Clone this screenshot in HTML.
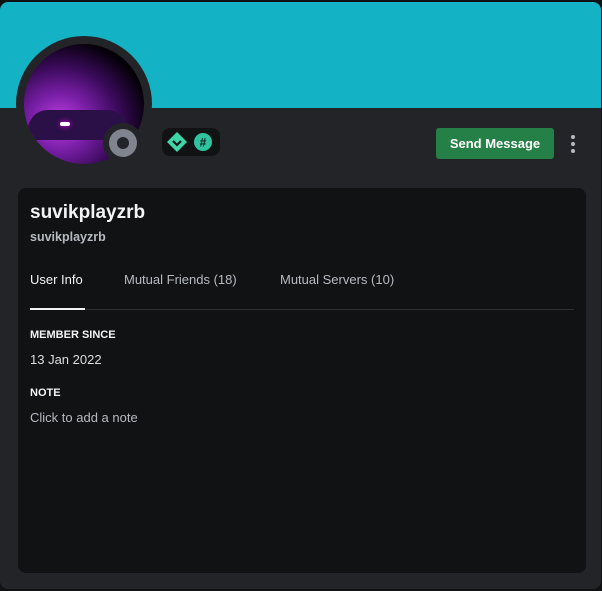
<!DOCTYPE html><html><head><style>
*{margin:0;padding:0;box-sizing:border-box}
body{width:602px;height:591px;background:#111214;font-family:"Liberation Sans",sans-serif;overflow:hidden;position:relative}
.frame{position:absolute;left:0;top:2px;width:601px;height:587px;background:#232428;border-radius:8px;overflow:hidden}
.banner{position:absolute;left:0;top:0;width:100%;height:106px;background:#13b2c4}
.av{position:absolute;left:16px;top:34px;width:136px;height:136px;border-radius:50%;background:#232428}
.pic{position:absolute;left:8px;top:8px;width:120px;height:120px;border-radius:50%;overflow:hidden;background:radial-gradient(ellipse at 30% 65%,#c040e0 0%,#7a1fa8 25%,#3a0a5a 50%,#050008 75%)}
.status{position:absolute;left:103px;top:121px;width:40px;height:40px;border-radius:50%;background:#232428}
.status i{position:absolute;left:6px;top:6px;width:28px;height:28px;border-radius:50%;background:#80848e}
.status b{position:absolute;left:14px;top:14px;width:12px;height:12px;border-radius:50%;background:#232428}
.badges{position:absolute;left:162px;top:126px;width:58px;height:28px;border-radius:8px;background:#111214}
.btn{position:absolute;left:436px;top:126px;width:118px;height:31px;background:#248046;border-radius:3px;color:#fff;font-size:13px;font-weight:bold;text-align:center;line-height:31px}
.dots{position:absolute;left:571px;top:133px}
.dots i{display:block;width:4px;height:4px;border-radius:50%;background:#b5bac1;margin-bottom:3px}
.card{position:absolute;left:18px;top:186px;width:568px;height:385px;background:#111214;border-radius:8px}
.t{position:absolute;color:#f2f3f5}
</style></head><body><div class="frame">
<div class="banner"></div>
<div class="av"><div class="pic">
<div style="position:absolute;left:4px;top:66px;width:104px;height:30px;background:#2a1046;border-radius:30px 40px 6px 6px"></div>
<div style="position:absolute;left:36px;top:78px;width:10px;height:4px;background:#fff;border-radius:2px;box-shadow:0 0 6px #f0f"></div>
</div></div>
<div class="status"><i></i><b></b></div>
<div class="badges">
<svg width="58" height="28" viewBox="0 0 58 28"><path d="M15 4l10 10-10 10L5 14z" fill="#3ed6a8"/><path d="M11 13l4 4 4-4" stroke="#111214" stroke-width="2.2" fill="none"/><circle cx="41" cy="14" r="9" fill="#2ec4a0"/><text x="41" y="18.5" font-size="12" font-weight="bold" text-anchor="middle" fill="#111214" font-family="Liberation Sans">#</text></svg>
</div>
<div class="btn">Send Message</div>
<div class="dots"><i></i><i></i><i></i></div>
<div class="card">
<div class="t" style="left:12px;top:14px;font-size:19px;font-weight:bold">suvikplayzrb</div>
<div class="t" style="left:12px;top:42px;font-size:12.5px;font-weight:bold;color:#b5bac1">suvikplayzrb</div>
<div class="t" style="left:12px;top:84px;font-size:13px">User Info</div>
<div class="t" style="left:106px;top:84px;font-size:13px;color:#b5bac1">Mutual Friends (18)</div>
<div class="t" style="left:262px;top:84px;font-size:13px;color:#b5bac1">Mutual Servers (10)</div>
<div style="position:absolute;left:12px;top:121px;width:544px;height:1px;background:#2e2f34"></div>
<div style="position:absolute;left:12px;top:120px;width:55px;height:2px;background:#f2f3f5"></div>
<div class="t" style="left:12px;top:141px;font-size:11px;font-weight:bold">MEMBER SINCE</div>
<div class="t" style="left:12px;top:164px;font-size:13px;color:#dbdee1">13 Jan 2022</div>
<div class="t" style="left:12px;top:199px;font-size:11px;font-weight:bold">NOTE</div>
<div class="t" style="left:12px;top:222px;font-size:13px;color:#b5bac1">Click to add a note</div>
</div>
</div></body></html>
